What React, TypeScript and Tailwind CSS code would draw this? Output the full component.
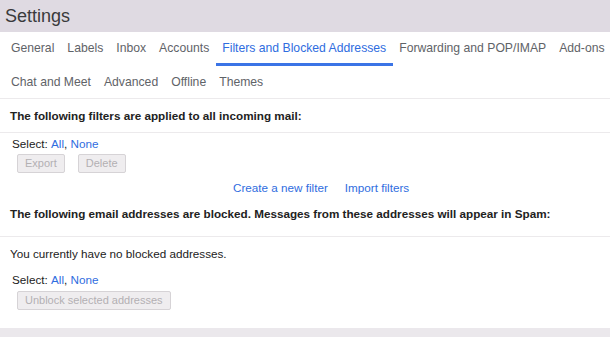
const tabsTop = ["General", "Labels", "Inbox", "Accounts", "Filters and Blocked Addresses", "Forwarding and POP/IMAP", "Add-ons"];
const tabsBottom = ["Chat and Meet", "Advanced", "Offline", "Themes"];
const active = "Filters and Blocked Addresses";

function Tab({ label }: { label: string }) {
  const on = label === active;
  return (
    <div
      className={
        "flex h-full items-center whitespace-nowrap border-b-[3px] px-[6.5px] pt-[2px] " +
        (on ? "border-[#3b74e6] text-[#2f6de0]" : "border-transparent text-[#5f6368]")
      }
    >
      {label}
    </div>
  );
}

function SelectLine({ h }: { h: string }) {
  return (
    <div className={"flex items-center pl-[12px] text-[#222] " + h}>
      Select:&nbsp;<span className="text-[#2f6de0]">All</span>,&nbsp;
      <span className="text-[#2f6de0]">None</span>
    </div>
  );
}

function Btn({ label }: { label: string }) {
  return (
    <div className="flex h-[19px] items-center rounded-[2px] border border-[#d6d3d6] bg-[#efedef] px-[7px] text-[11px] text-[#b3b0b3]">
      {label}
    </div>
  );
}

export default function App() {
  return (
    <div className="flex h-[337px] w-[610px] flex-col overflow-hidden bg-white font-['Liberation_Sans',Arial,sans-serif] text-[11.7px]">
      <div className="flex h-[32px] shrink-0 items-center bg-[#dfdae2] pl-[5px] text-[18px] text-[#3a3a3c]">
        Settings
      </div>

      <div className="flex h-[34px] items-stretch pl-[4.5px] text-[12.2px]">
        {tabsTop.map((t) => (
          <Tab key={t} label={t} />
        ))}
      </div>
      <div className="flex h-[32px] items-center pl-[4.5px] pt-[1px] text-[12.2px]">
        {tabsBottom.map((t) => (
          <div key={t} className="whitespace-nowrap px-[6.5px] text-[#5f6368]">
            {t}
          </div>
        ))}
      </div>

      <div className="h-px bg-[#eceaec]" />
      <div className="flex h-[33px] items-center pl-[10px] font-bold text-[#222]">
        The following filters are applied to all incoming mail:
      </div>
      <div className="h-px bg-[#eceaec]" />

      <SelectLine h="h-[21px]" />
      <div className="flex gap-[13px] pl-[17px]">
        <Btn label="Export" />
        <Btn label="Delete" />
      </div>
      <div className="flex h-[27px] items-center gap-[17px] pl-[233px] pt-[2px] text-[#2f6de0]">
        <span>Create a new filter</span>
        <span>Import filters</span>
      </div>

      <div className="flex h-[27px] items-center pl-[10px] font-bold text-[#222]">
        The following email addresses are blocked. Messages from these addresses will appear in Spam:
      </div>
      <div className="h-[9px]" />
      <div className="h-px bg-[#eceaec]" />
      <div className="flex h-[33px] items-center pl-[10px] text-[#222]">
        You currently have no blocked addresses.
      </div>
      <SelectLine h="h-[20px]" />
      <div className="flex pl-[17px] pt-[1px]">
        <Btn label="Unblock selected addresses" />
      </div>

      <div className="flex-1" />
      <div className="h-[9px] bg-[#ebe8ec]" />
    </div>
  );
}
